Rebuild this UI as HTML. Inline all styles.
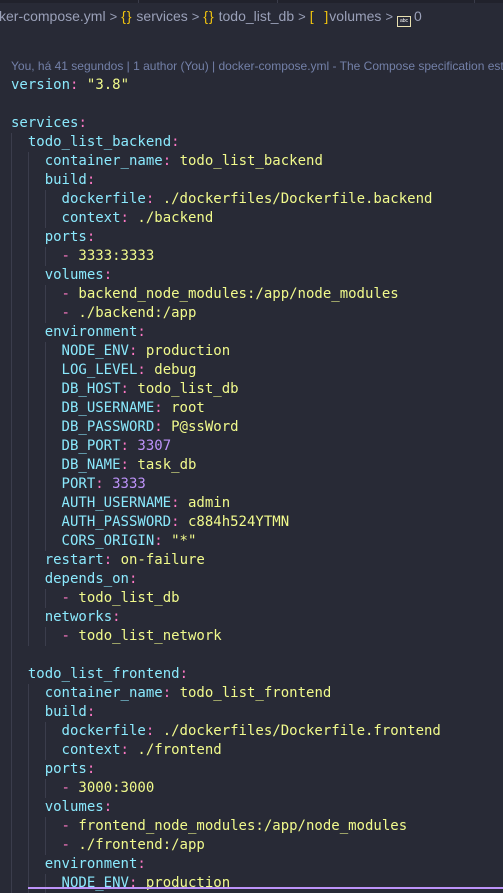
<!DOCTYPE html>
<html><head><meta charset="utf-8">
<style>
html,body{margin:0;padding:0;}
body{width:503px;height:890px;overflow:hidden;background:#282a36;position:relative;font-family:"DejaVu Sans Mono","Liberation Mono",monospace;}
.tabs{position:absolute;left:0;top:0;width:503px;height:3px;background:#21222c;}
.tabs i{position:absolute;top:0;width:1px;height:3px;background:#3a3c4a;}
.bc{position:absolute;left:-1px;top:6px;height:20px;font:14px "Liberation Sans","DejaVu Sans",sans-serif;color:#9aa0b8;white-space:nowrap;line-height:20px;}
.bc .y{color:#f1c40f;letter-spacing:1px}
.bc .g{color:#9aa0b8;margin:0 4px;font-size:13px}
.bc .ic{display:inline-block;width:14px;height:11px;border:1.5px solid #e8e0b0;box-sizing:border-box;vertical-align:-1px;margin-right:3px;font-size:5px;line-height:8px;text-align:center;color:#fff}
.lens{position:absolute;left:11px;top:59px;font:12px "Liberation Sans","DejaVu Sans",sans-serif;color:#7380a8;white-space:nowrap;}
.code{position:absolute;left:11px;top:76px;font-size:14px;line-height:19px;}
.l{height:19px;white-space:pre;overflow:hidden;}
.i{display:inline-block;width:2ch;height:19px;vertical-align:top;box-shadow:inset 1px 0 0 #3b3d4c;}
.k{color:#8be9fd}.p{color:#ff79c6}.s{color:#f1fa8c}.n{color:#bd93f9}
.bot{position:absolute;left:28px;top:887px;width:475px;height:2px;background:#bd93f9;}
</style></head><body>
<div class="tabs"><i style="left:138px"></i><i style="left:277px"></i><i style="left:474px"></i></div>
<div class="bc">ker-compose.yml<span class="g">&gt;</span><span class="y">{}</span> services<span class="g">&gt;</span><span class="y">{}</span> todo_list_db<span class="g">&gt;</span><span class="y">[&nbsp;&nbsp;]</span>volumes<span class="g">&gt;</span><span class="ic">abc</span>0</div>
<div class="lens">You, há 41 segundos | 1 author (You) | docker-compose.yml - The Compose specification est</div>
<div class="code"><div class="l"><span class="k">version</span><span class="p">:</span> <span class="s">"3.8"</span></div><div class="l"></div><div class="l"><span class="k">services</span><span class="p">:</span></div><div class="l"><span class="i"></span><span class="k">todo_list_backend</span><span class="p">:</span></div><div class="l"><span class="i"></span><span class="i"></span><span class="k">container_name</span><span class="p">:</span> <span class="s">todo_list_backend</span></div><div class="l"><span class="i"></span><span class="i"></span><span class="k">build</span><span class="p">:</span></div><div class="l"><span class="i"></span><span class="i"></span><span class="i"></span><span class="k">dockerfile</span><span class="p">:</span> <span class="s">./dockerfiles/Dockerfile.backend</span></div><div class="l"><span class="i"></span><span class="i"></span><span class="i"></span><span class="k">context</span><span class="p">:</span> <span class="s">./backend</span></div><div class="l"><span class="i"></span><span class="i"></span><span class="k">ports</span><span class="p">:</span></div><div class="l"><span class="i"></span><span class="i"></span><span class="i"></span><span class="p">-</span> <span class="s">3333:3333</span></div><div class="l"><span class="i"></span><span class="i"></span><span class="k">volumes</span><span class="p">:</span></div><div class="l"><span class="i"></span><span class="i"></span><span class="i"></span><span class="p">-</span> <span class="s">backend_node_modules:/app/node_modules</span></div><div class="l"><span class="i"></span><span class="i"></span><span class="i"></span><span class="p">-</span> <span class="s">./backend:/app</span></div><div class="l"><span class="i"></span><span class="i"></span><span class="k">environment</span><span class="p">:</span></div><div class="l"><span class="i"></span><span class="i"></span><span class="i"></span><span class="k">NODE_ENV</span><span class="p">:</span> <span class="s">production</span></div><div class="l"><span class="i"></span><span class="i"></span><span class="i"></span><span class="k">LOG_LEVEL</span><span class="p">:</span> <span class="s">debug</span></div><div class="l"><span class="i"></span><span class="i"></span><span class="i"></span><span class="k">DB_HOST</span><span class="p">:</span> <span class="s">todo_list_db</span></div><div class="l"><span class="i"></span><span class="i"></span><span class="i"></span><span class="k">DB_USERNAME</span><span class="p">:</span> <span class="s">root</span></div><div class="l"><span class="i"></span><span class="i"></span><span class="i"></span><span class="k">DB_PASSWORD</span><span class="p">:</span> <span class="s">P@ssWord</span></div><div class="l"><span class="i"></span><span class="i"></span><span class="i"></span><span class="k">DB_PORT</span><span class="p">:</span> <span class="n">3307</span></div><div class="l"><span class="i"></span><span class="i"></span><span class="i"></span><span class="k">DB_NAME</span><span class="p">:</span> <span class="s">task_db</span></div><div class="l"><span class="i"></span><span class="i"></span><span class="i"></span><span class="k">PORT</span><span class="p">:</span> <span class="n">3333</span></div><div class="l"><span class="i"></span><span class="i"></span><span class="i"></span><span class="k">AUTH_USERNAME</span><span class="p">:</span> <span class="s">admin</span></div><div class="l"><span class="i"></span><span class="i"></span><span class="i"></span><span class="k">AUTH_PASSWORD</span><span class="p">:</span> <span class="s">c884h524YTMN</span></div><div class="l"><span class="i"></span><span class="i"></span><span class="i"></span><span class="k">CORS_ORIGIN</span><span class="p">:</span> <span class="s">"*"</span></div><div class="l"><span class="i"></span><span class="i"></span><span class="k">restart</span><span class="p">:</span> <span class="s">on-failure</span></div><div class="l"><span class="i"></span><span class="i"></span><span class="k">depends_on</span><span class="p">:</span></div><div class="l"><span class="i"></span><span class="i"></span><span class="i"></span><span class="p">-</span> <span class="s">todo_list_db</span></div><div class="l"><span class="i"></span><span class="i"></span><span class="k">networks</span><span class="p">:</span></div><div class="l"><span class="i"></span><span class="i"></span><span class="i"></span><span class="p">-</span> <span class="s">todo_list_network</span></div><div class="l"><span class="i"></span></div><div class="l"><span class="i"></span><span class="k">todo_list_frontend</span><span class="p">:</span></div><div class="l"><span class="i"></span><span class="i"></span><span class="k">container_name</span><span class="p">:</span> <span class="s">todo_list_frontend</span></div><div class="l"><span class="i"></span><span class="i"></span><span class="k">build</span><span class="p">:</span></div><div class="l"><span class="i"></span><span class="i"></span><span class="i"></span><span class="k">dockerfile</span><span class="p">:</span> <span class="s">./dockerfiles/Dockerfile.frontend</span></div><div class="l"><span class="i"></span><span class="i"></span><span class="i"></span><span class="k">context</span><span class="p">:</span> <span class="s">./frontend</span></div><div class="l"><span class="i"></span><span class="i"></span><span class="k">ports</span><span class="p">:</span></div><div class="l"><span class="i"></span><span class="i"></span><span class="i"></span><span class="p">-</span> <span class="s">3000:3000</span></div><div class="l"><span class="i"></span><span class="i"></span><span class="k">volumes</span><span class="p">:</span></div><div class="l"><span class="i"></span><span class="i"></span><span class="i"></span><span class="p">-</span> <span class="s">frontend_node_modules:/app/node_modules</span></div><div class="l"><span class="i"></span><span class="i"></span><span class="i"></span><span class="p">-</span> <span class="s">./frontend:/app</span></div><div class="l"><span class="i"></span><span class="i"></span><span class="k">environment</span><span class="p">:</span></div><div class="l"><span class="i"></span><span class="i"></span><span class="i"></span><span class="k">NODE_ENV</span><span class="p">:</span> <span class="s">production</span></div></div>
<div class="bot"></div>
</body></html>
